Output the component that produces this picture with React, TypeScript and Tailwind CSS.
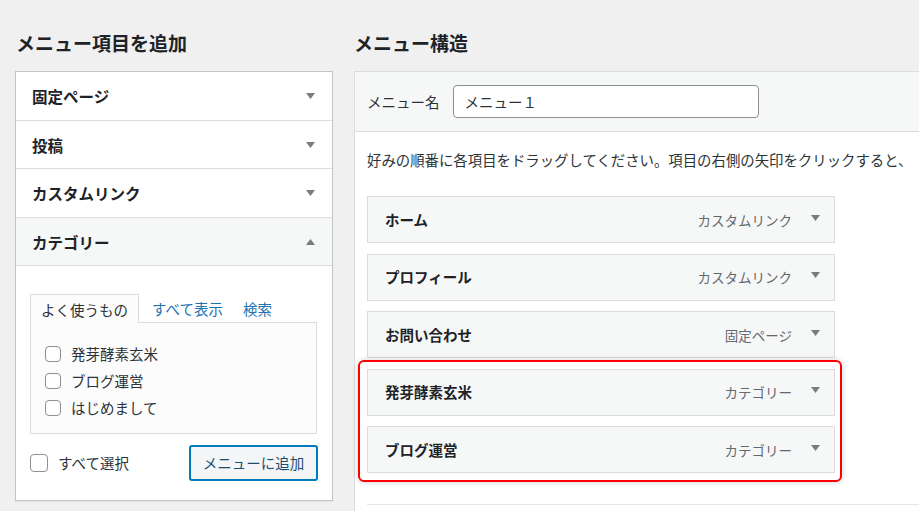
import React from "react";

const Arrow = ({ up = false }: { up?: boolean }) => (
  <svg width="9" height="6" viewBox="0 0 9 6" className="shrink-0">
    <polygon points={up ? "0,6 9,6 4.5,0" : "0,0 9,0 4.5,6"} fill="#787c82" />
  </svg>
);

const Box = () => (
  <span className="inline-block w-4 h-4 rounded-[4px] border border-[#8c8f94] bg-white shrink-0" />
);

const sections = [
  { label: "固定ページ", h: "h-[49px]" },
  { label: "投稿", h: "h-[48px]" },
  { label: "カスタムリンク", h: "h-[49px]" },
];

const cats = ["発芽酵素玄米", "ブログ運営", "はじめまして"];

const MenuItem = ({ title, type }: { title: string; type: string }) => (
  <div className="w-[468px] h-[47px] bg-[#f6f7f7] border border-[#dcdcde] flex items-center pl-[17px] pr-[14px]">
    <div className="flex-1 font-bold text-[14.5px] text-[#1d2327] leading-5">{title}</div>
    <div className="text-[13.5px] text-[#646970] leading-5 mr-[19px]">{type}</div>
    <div className="-mt-[4px]">
      <Arrow />
    </div>
  </div>
);

export default function App() {
  return (
    <div className="w-[919px] h-[511px] overflow-hidden bg-[#f0f0f1] flex font-['Noto_Sans_CJK_JP',sans-serif] text-[#1d2327]">
      {/* left column */}
      <div className="pl-[15px] w-[333px] shrink-0">
        <h2 className="pt-[31px] pb-[16px] pl-[1px] text-[19px] font-bold leading-6">メニュー項目を追加</h2>
        <div className="bg-white border border-[#c3c4c7] shadow-[0_1px_1px_rgba(0,0,0,0.04)]">
          {sections.map((s) => (
            <div key={s.label} className={`${s.h} border-b border-[#dcdcde] flex items-center justify-between pl-4 pr-[17px]`}>
              <span className="font-bold text-[15.5px] leading-5">{s.label}</span>
              <Arrow />
            </div>
          ))}
          <div className="h-[48px] bg-[#f6f7f7] border-b border-[#dcdcde] flex items-center justify-between pl-4 pr-[17px]">
            <span className="font-bold text-[15.5px] leading-5">カテゴリー</span>
            <Arrow up />
          </div>
          <div className="pt-[28px] pl-[14px] pr-[15px] pb-[19px]">
            <div className="flex items-end text-[14.5px] leading-5">
              <div className="h-[29px] -mb-px border border-b-0 border-[#dcdcde] bg-[#fcfcfc] px-[10px] pt-[5px] relative z-10 text-[#2c3338]">
                よく使うもの
              </div>
              <div className="h-[28px] pt-[5px] ml-[3px] px-[10px] text-[#2271b1]">すべて表示</div>
              <div className="h-[28px] pt-[5px] px-[10px] text-[#2271b1]">検索</div>
            </div>
            <div className="border border-[#dcdcde] bg-[#fcfcfc] pl-[14px] pt-[17px] pb-[12px]">
              {cats.map((c) => (
                <label key={c} className="h-[27px] flex items-center gap-[10px] text-[14.5px] text-[#2c3338]">
                  <Box />
                  <span className="leading-5">{c}</span>
                </label>
              ))}
            </div>
            <div className="mt-[11px] flex items-center justify-between">
              <label className="flex items-center gap-[10px] text-[14.5px] text-[#2c3338]">
                <span className="inline-block w-[18px] h-[18px] rounded-[4px] border border-[#8c8f94] bg-white" />
                <span className="leading-5">すべて選択</span>
              </label>
              <button className="w-[129px] h-[36px] mr-[-1px] rounded-[3px] border-2 border-[#007cba] bg-[#f3f5f6] text-[14.5px] text-[#1b4f72] leading-5">
                メニューに追加
              </button>
            </div>
          </div>
        </div>
      </div>

      {/* right column */}
      <div className="ml-[21px] flex-1 min-w-0">
        <h2 className="pt-[31px] pb-[16px] text-[19px] font-bold leading-6">メニュー構造</h2>
        <div className="w-[620px] h-[500px] bg-white border border-[#dcdcde]">
          <div className="h-[60px] bg-[#f6f7f7] border-b border-[#dcdcde] flex items-center pl-[12px]">
            <span className="text-[14.5px] text-[#2c3338] leading-5">メニュー名</span>
            <div className="ml-[13px] w-[306px] h-[33px] bg-white border border-[#8c8f94] rounded-[4px] flex items-center pl-[11px] text-[14.5px] text-[#2c3338] leading-5">
              メニュー１
            </div>
          </div>
          <div className="pt-[18px] pl-[12px]">
            <p className="text-[14.4px] leading-5 text-[#2c3338] whitespace-nowrap">
              好みの順番に各項目をドラッグしてください。項目の右側の矢印をクリックすると、
            </p>
            <div className="mt-[26px] flex flex-col gap-[10.5px]">
              <MenuItem title="ホーム" type="カスタムリンク" />
              <MenuItem title="プロフィール" type="カスタムリンク" />
              <MenuItem title="お問い合わせ" type="固定ページ" />
              <div className="relative flex flex-col gap-[10.5px]">
                <MenuItem title="発芽酵素玄米" type="カテゴリー" />
                <MenuItem title="ブログ運営" type="カテゴリー" />
                <div className="absolute -left-[9px] -top-[9px] w-[484px] h-[122px] rounded-[6px] border-2 border-[#ff0000] shadow-[0_0_6px_rgba(0,0,0,0.18)] pointer-events-none" />
              </div>
            </div>
            <div className="mt-[31px] border-t border-[#e6e6e6]" />
          </div>
        </div>
      </div>
    </div>
  );
}
